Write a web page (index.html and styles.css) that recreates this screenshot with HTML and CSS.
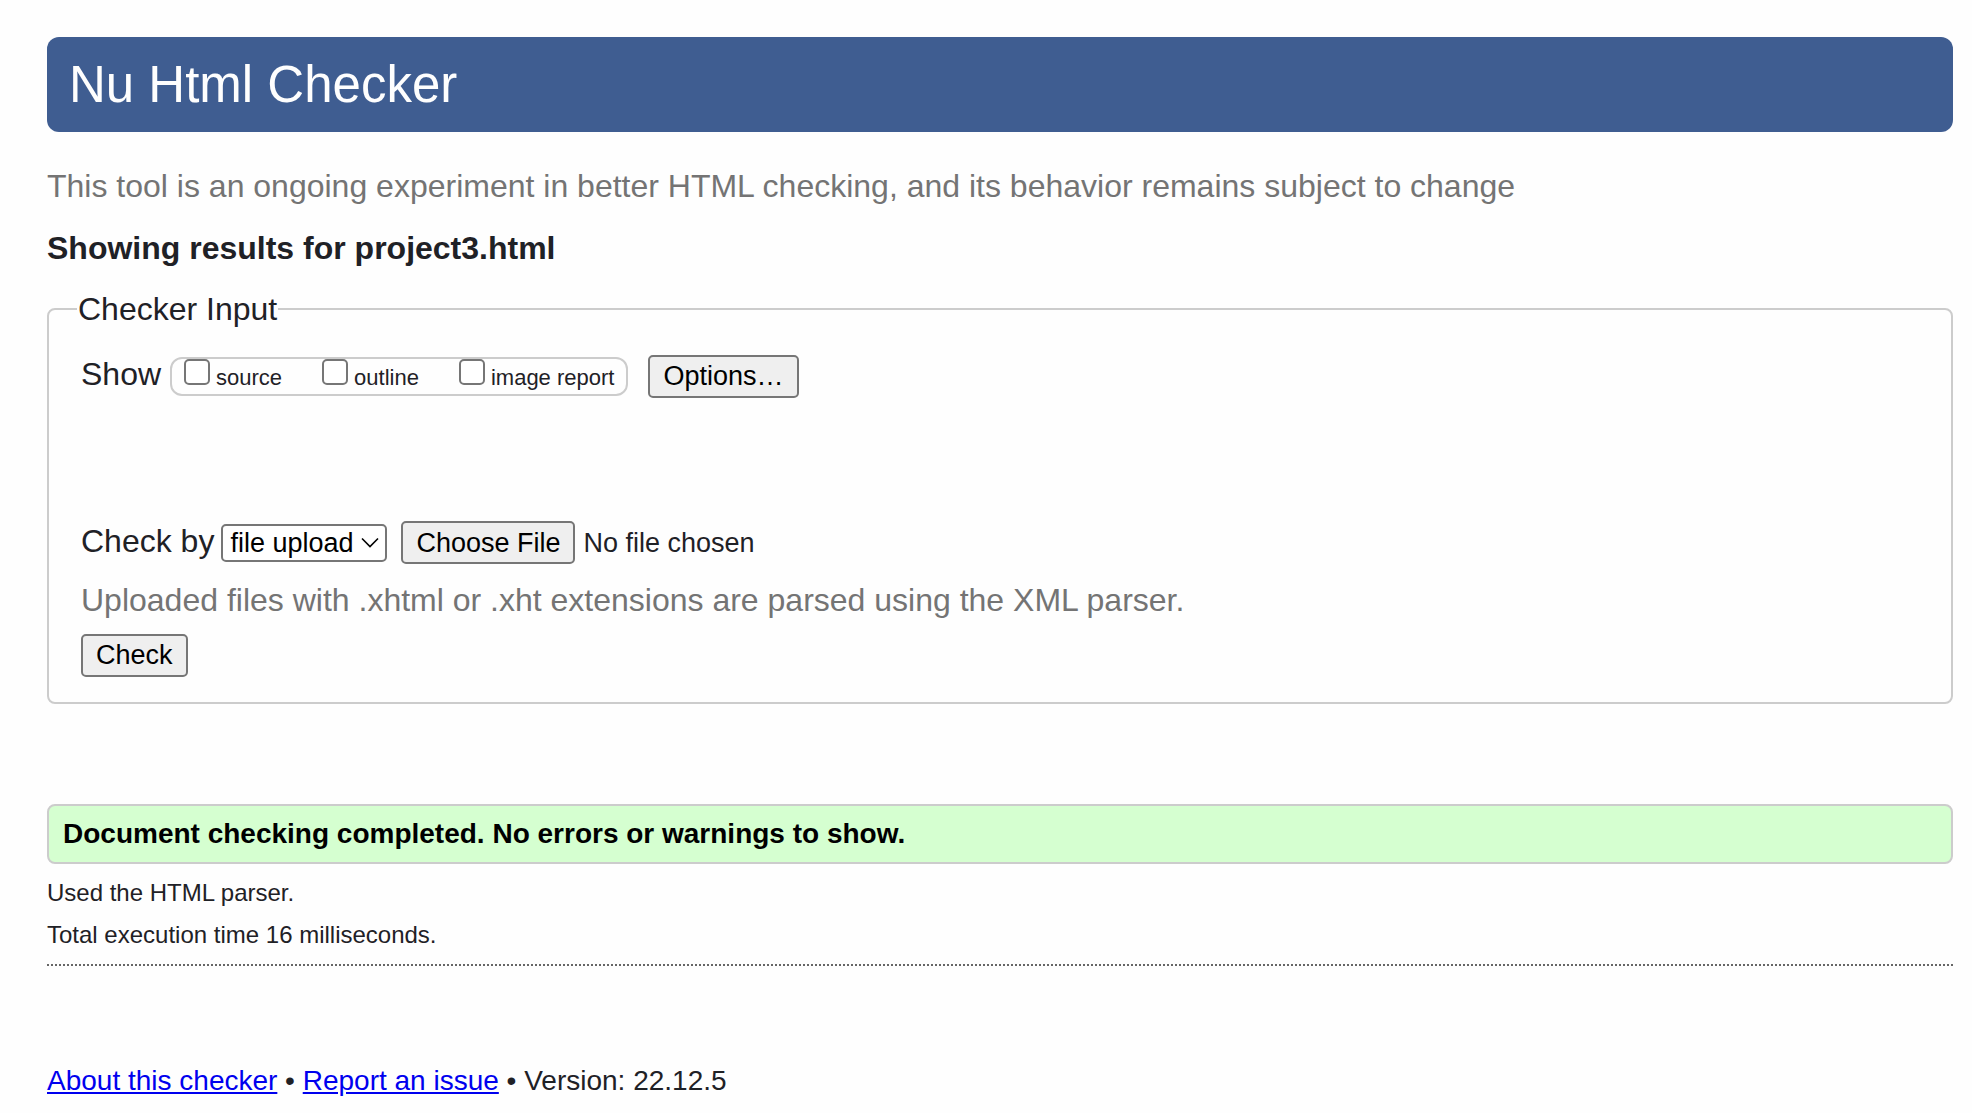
FILE: index.html
```html
<!DOCTYPE html>
<html lang="en">
<head>
<meta charset="utf-8">
<meta name="viewport" content="width=device-width, initial-scale=1">
<title>Showing results for project3.html - Nu Html Checker</title>
<link rel="stylesheet" href="styles.css">
</head>
<body>
<header class="banner">
  <h1 class="banner-title">Nu Html Checker</h1>
</header>
<main>
  <p class="tagline">This tool is an ongoing experiment in better HTML checking, and its behavior remains subject to change</p>
  <h2 class="result-title">Showing results for project3.html</h2>
  <form>
    <fieldset class="checker">
      <legend class="checker-legend">Checker Input</legend>
      <div class="row show-row">
        <span id="show-label">Show</span>
        <div class="pill" role="group" aria-labelledby="show-label">
          <label class="choice"><input class="tick" type="checkbox" name="showsource">source</label>
          <label class="choice"><input class="tick" type="checkbox" name="showoutline">outline</label>
          <label class="choice"><input class="tick" type="checkbox" name="showimagereport">image report</label>
        </div>
        <button class="button" type="button">Options…</button>
      </div>
      <div class="row input-row">
        <label for="docselect">Check by</label>
        <span class="select-wrap">
          <select class="select" id="docselect" name="docselect">
            <option>file upload</option>
            <option>address</option>
            <option>text input</option>
          </select>
          <svg class="chevron" width="18" height="12" viewBox="0 0 18 12" aria-hidden="true"><path d="M1 1.500 9 9.500 17 1.500" fill="none" stroke="#000" stroke-width="1.600"/></svg>
        </span>
        <input class="file" type="file" name="file" aria-label="File to check">
      </div>
      <p class="hint">Uploaded files with .xhtml or .xht extensions are parsed using the XML parser.</p>
      <button class="button" type="submit">Check</button>
    </fieldset>
  </form>
  <p class="success">Document checking completed. No errors or warnings to show.</p>
  <p class="detail">Used the HTML parser.</p>
  <p class="detail">Total execution time 16 milliseconds.</p>
</main>
<footer class="footer">
  <a href="#about">About this checker</a> • <a href="#issue">Report an issue</a> • Version: 22.12.5
</footer>
</body>
</html>
```

FILE: styles.css
```css
* {
  box-sizing: border-box;
}

body {
  margin: 0;
  padding: 37px 19px 0 47px;
  background: #fefefe;
  color: #1f2126;
  font-family: "Liberation Sans", Arial, Helvetica, sans-serif;
  font-size: 32px;
  line-height: 40px;
}

p, h1, h2 {
  margin: 0;
}

.banner {
  padding: 18px 22px 17px;
  border-radius: 12px;
  background: #3f5d91;
  color: #fefefe;
}

.banner-title {
  font-size: 51px;
  font-weight: normal;
  line-height: 60px;
}

.tagline,
.hint {
  color: #747474;
}

.tagline {
  margin-top: 34px;
}

.result-title {
  margin: 22px 0 21px;
  font-size: 32px;
}

.checker {
  margin: 0;
  padding: 25px 32px;
  border: 2px solid #ccc;
  border-radius: 8px;
}

.checker-legend {
  margin-left: -4px;
  padding: 0 1px;
}

.row {
  display: flex;
  align-items: baseline;
}

.show-row {
  gap: 9px;
}

.pill {
  display: flex;
  align-items: flex-start;
  gap: 40px;
  height: 39px;
  padding: 0 12px;
  border: 2px solid #ccc;
  border-radius: 12px;
  font-size: 22px;
  line-height: 28px;
}

.choice {
  display: flex;
  align-items: baseline;
  gap: 6px;
}

.tick {
  width: 26px;
  height: 26px;
  margin: 0;
  border: 2px solid #767676;
  border-radius: 5px;
  background: #fff;
  appearance: none;
}

.tick:checked {
  background: #0075ff;
}

.button,
.file::file-selector-button {
  height: 43px;
  margin: 0;
  padding: 0 13px;
  border: 2px solid #767676;
  border-radius: 5px;
  background: #efefef;
  color: #000;
  font: 27px/36px "Liberation Sans", Arial, sans-serif;
}

.button {
  display: block;
}

.pill + .button {
  margin-left: 11px;
}

.input-row {
  margin-top: 123px;
}

.select-wrap {
  display: grid;
  align-items: baseline;
  margin: 0 14px 0 7px;
}

.select,
.chevron {
  grid-area: 1 / 1;
}

.select {
  width: 166px;
  height: 38px;
  padding: 0 7px;
  border: 2px solid #767676;
  border-radius: 5px;
  background: #fff;
  color: #000;
  font: 27px/34px "Liberation Sans", Arial, sans-serif;
  appearance: none;
}

.chevron {
  align-self: center;
  justify-self: end;
  margin-right: 8px;
  pointer-events: none;
}

.file {
  font: 27px/43px "Liberation Sans", Arial, sans-serif;
  color: inherit;
}

.file::file-selector-button {
  margin-right: 8px;
}

.hint {
  margin: 15px 0 14px;
}

.success {
  margin: 100px 0 8px;
  padding: 10px 14px;
  border: 2px solid #ccc;
  border-radius: 8px;
  background: #d5ffd0;
  color: #000;
  font-size: 28px;
  font-weight: bold;
  line-height: 36px;
}

.detail {
  font-size: 24px;
  line-height: 42px;
}

.footer {
  margin-top: 8px;
  padding: 97px 0 16px;
  border-top: 2px dotted #666;
  font-size: 28px;
  line-height: 36px;
}

.footer a {
  color: #0000ee;
}
```
